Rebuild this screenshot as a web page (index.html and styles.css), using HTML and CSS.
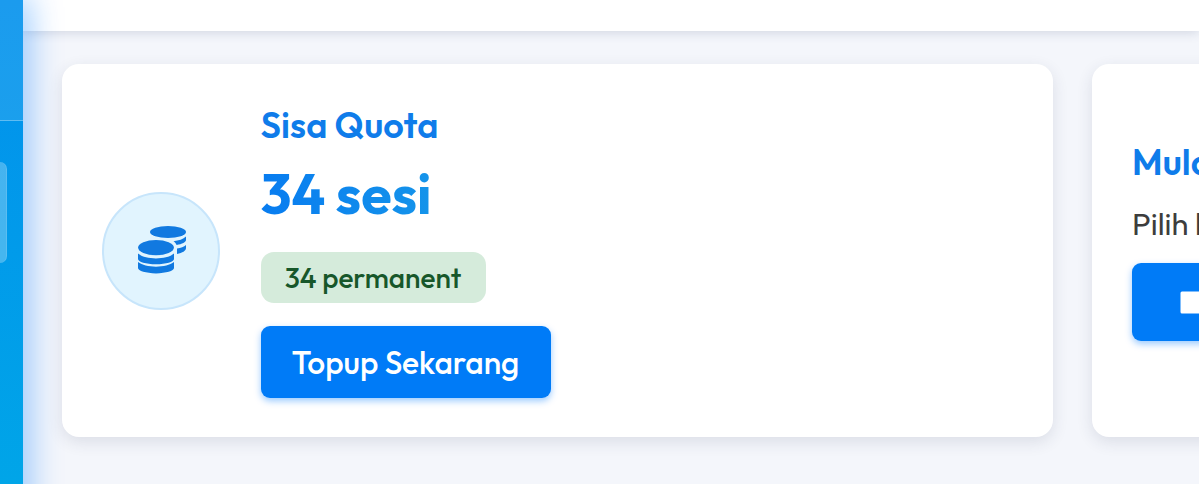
FILE: index.html
```html
<!DOCTYPE html>
<html lang="id">
<head>
<meta charset="utf-8">
<title>Dashboard</title>
<link rel="stylesheet" href="styles.css">
</head>
<body>
<div class="app">
  <aside class="sidebar">
    <div class="brand"></div>
    <nav class="nav"><span class="nav-item"></span></nav>
  </aside>
  <div class="page">
    <header class="topbar"></header>
    <main class="cards">
      <section class="card quota">
        <div class="badge">
          <svg width="50" height="50" viewBox="-1 0.500 50 50" fill="#1179e0">
            <ellipse cx="31" cy="6.500" rx="18" ry="6.1"/>
            <path d="M49 11v3.500c0 2.200-3.800 4.100-9.400 5-.5-1.400-1.600-2.700-3.100-3.800 5.200-.6 9.800-1.900 12.500-4.700z"/>
            <path d="M49 19.400v3.200c0 2.700-3.500 5-9 6v-5.700c3.800-.5 7.100-1.400 9-3.500z"/>
            <ellipse cx="19" cy="22.100" rx="17.900" ry="7.600"/>
            <path d="M1 28.100c4 3.200 10.500 4.800 18 4.800s14-1.600 18-4.800v5.400c0 2.800-8 5.300-18 5.300s-18-2.500-18-5.300z"/>
            <path d="M1 36.600c4 3.200 10.500 4.600 18 4.600s14-1.400 18-4.600v6c0 2.800-8 5.300-18 5.300s-18-2.500-18-5.300z"/>
          </svg>
        </div>
        <div class="info">
          <h2 class="title">Sisa Quota</h2>
          <div class="amount">34 sesi</div>
          <span class="tag">34 permanent</span>
          <button class="topup"><span>Topup Sekarang</span></button>
        </div>
      </section>
      <section class="card start">
        <h2 class="title start-title">Mula</h2>
        <p class="desc">Pilih k</p>
        <button class="launch">
          <svg width="48" height="24" viewBox="0 0 48 24" fill="#fff"><rect x=".5" y="1.500" width="47" height="22" rx="1.500"/></svg>
        </button>
      </section>
    </main>
  </div>
</div>
</body>
</html>
```
FILE: styles.css
```css
* { box-sizing: border-box; }
body { margin: 0; overflow: hidden; font-family: Outfit, Lato, "Open Sans", sans-serif; }
h2, p { margin: 0; }
button { border: 0; font: inherit; white-space: nowrap; }
svg { display: block; overflow: visible; }
.app { display: flex; width: 1199px; height: 484px; overflow: hidden; background: #f4f6fb; }
.sidebar {
  position: relative; z-index: 1; flex: none; width: 23px; height: 540px;
  background: linear-gradient(#0290ec, #00a5e8 484px);
  box-shadow: 0 0 34px 4px rgba(0, 123, 255, .46);
}
.brand { height: 121px; background: rgba(255, 255, 255, .1); border-bottom: 1px solid rgba(255, 255, 255, .3); }
.nav { padding-top: 41px; }
.nav-item { display: block; width: 7px; height: 101px; border-radius: 0 12px 12px 0; background: rgba(255, 255, 255, .27); border-right: 1px solid rgba(255, 255, 255, .12); }
.page { flex: 1; min-width: 0; }
.topbar { height: 31px; background: #fff; box-shadow: 0 1px 12px rgba(50, 70, 110, .2); }
.cards { display: flex; gap: 39px; padding: 33px 0 0 39px; }
.card { position: relative; z-index: 2; flex: none; height: 373px; border-radius: 17px; background: #fff; box-shadow: 0 5px 16px rgba(40, 50, 80, .12); }
.quota { display: flex; align-items: center; width: 991px; padding: 0 40px; gap: 40.500px; }
.badge {
  display: flex; align-items: center; justify-content: center;
  width: 118px; height: 118px; border-radius: 50%;
  border: 2px solid #c7e5fb; background: #e1f4fe;
}
.info { display: flex; flex-direction: column; align-items: flex-start; width: 500px; height: 289px; }
.info > * { flex-shrink: 0; }
.title { height: 39px; font-size: 36px; line-height: 38px; font-weight: 600; color: #0f7cea; white-space: nowrap; letter-spacing: .1px; }
.start-title { line-height: 39px; }
.amount {
  height: 68px; margin-top: 14px; font-size: 55.500px; line-height: 68px; font-weight: 700;
  background: linear-gradient(90deg, #087cf0, #1594ea); -webkit-background-clip: text; background-clip: text; color: transparent;
}
.tag {
  width: 225px; height: 51px; margin-top: 25px; border-radius: 13px;
  background: #d5ebdb; color: #17572a; font-size: 28px; line-height: 51px; font-weight: 500; text-align: center;
}
.topup {
  width: 290px; height: 72px; margin-top: 23px; padding: 0; border-radius: 9px;
  background: #007bf7; color: #fff; font-size: 31.700px; font-weight: 500; line-height: 72px;
  box-shadow: 0 3px 7px rgba(0, 123, 255, .4);
}
.start { width: 991px; padding: 78px 40px 0; }
.desc { height: 40px; margin-top: 22px; font-size: 31px; line-height: 42px; color: #3d3d3d; }
.launch {
  display: flex; align-items: center; width: 400px; height: 78px; margin-top: 20px; padding: 0 0 0 48px;
  border-radius: 9px; background: #007bf7; box-shadow: 0 3px 7px rgba(0, 123, 255, .4);
}
```
